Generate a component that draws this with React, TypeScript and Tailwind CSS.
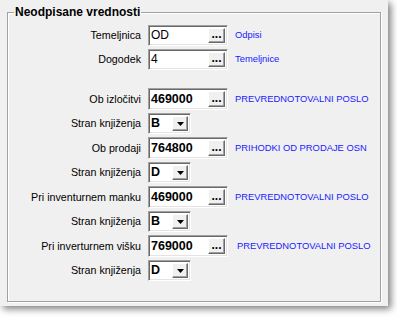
import React from "react";

const sunken =
  "relative flex items-center bg-white border border-t-[#a0a0a0] border-l-[#a0a0a0] border-b-white border-r-white shadow-[inset_1px_1px_0_#696969,inset_-1px_-1px_0_#e3e3e3]";

function Dots() {
  return (
    <div className="absolute right-[2px] top-[2px] bottom-[2px] w-[17px] flex items-center justify-center bg-[#f0f0f0] border border-t-white border-l-white border-b-[#696969] border-r-[#696969] shadow-[inset_-1px_-1px_0_#a0a0a0]">
      <span className="text-[12px] font-bold leading-none -mt-[3px] text-black">...</span>
    </div>
  );
}

function TextBox({ value, bold, h }: { value: string; bold?: boolean; h: string }) {
  return (
    <div className={`${sunken} w-[80px] ${h}`}>
      <span
        className={
          bold
            ? "pl-[2px] text-[12.5px] font-bold text-black leading-none"
            : "pl-[2px] text-[12px] text-black leading-none"
        }
      >
        {value}
      </span>
      <Dots />
    </div>
  );
}

function Combo({ value }: { value: string }) {
  return (
    <div className={`${sunken} w-[43px] h-[21px]`}>
      <span className="pl-[2px] text-[12.5px] font-bold text-black leading-none">{value}</span>
      <div className="absolute right-[2px] top-[2px] bottom-[2px] w-[16px] flex items-center justify-center bg-[#f0f0f0] border border-t-white border-l-white border-b-[#696969] border-r-[#696969] shadow-[inset_-1px_-1px_0_#a0a0a0]">
        <svg width="7" height="4" viewBox="0 0 7 4">
          <path d="M0 0H7L3.5 4Z" fill="#000" />
        </svg>
      </div>
    </div>
  );
}

function Label({ children }: { children: React.ReactNode }) {
  return (
    <div className="w-[133px] shrink-0 text-right text-[10.7px] text-black whitespace-nowrap leading-none">
      {children}
    </div>
  );
}

function Blue({ children, extra }: { children: React.ReactNode; extra?: string }) {
  return (
    <div
      className={`ml-[7px] ${extra ?? ""} text-[9.4px] text-[#1a1aff] whitespace-nowrap leading-none`}
    >
      {children}
    </div>
  );
}

export default function App() {
  return (
    <div className="w-[397px] h-[317px] bg-white" style={{ fontFamily: '"Liberation Sans", Arial, sans-serif' }}>
      <div className="w-[388px] h-[306px] bg-[#f0f0f0] pl-[7px] pr-[7px] pt-[5px] shadow-[3px_3px_7px_rgba(0,0,0,0.5)]">
        <fieldset className="h-[297px] border border-[#a0a0a0] shadow-[inset_1px_1px_0_#fff,1px_1px_0_#fff] m-0 p-0 min-w-0">
          <legend className="ml-[6px] px-[1px] text-[12px] font-bold text-black leading-[14px]">
            Neodpisane vrednosti
          </legend>
          <div className="pt-[4px] flex flex-col">
            <div className="flex items-center h-[24px]">
              <Label>Temeljnica</Label>
              <div className="ml-[7px]">
                <TextBox value="OD" h="h-[21px]" />
              </div>
              <Blue>Odpisi</Blue>
            </div>
            <div className="flex items-center h-[24px]">
              <Label>Dogodek</Label>
              <div className="ml-[7px]">
                <TextBox value="4" h="h-[21px]" />
              </div>
              <Blue>Temeljnice</Blue>
            </div>
            <div className="h-[16px]" />
            <div className="flex items-center h-[24px]">
              <Label>Ob izločitvi</Label>
              <div className="ml-[7px]">
                <TextBox value="469000" bold h="h-[22px]" />
              </div>
              <Blue>PREVREDNOTOVALNI POSLO</Blue>
            </div>
            <div className="flex items-center h-[25px]">
              <Label>Stran knjiženja</Label>
              <div className="ml-[7px]">
                <Combo value="B" />
              </div>
            </div>
            <div className="flex items-center h-[24px]">
              <Label>Ob prodaji</Label>
              <div className="ml-[7px]">
                <TextBox value="764800" bold h="h-[22px]" />
              </div>
              <Blue>PRIHODKI OD PRODAJE OSN</Blue>
            </div>
            <div className="flex items-center h-[25px]">
              <Label>Stran knjiženja</Label>
              <div className="ml-[7px]">
                <Combo value="D" />
              </div>
            </div>
            <div className="flex items-center h-[24px]">
              <Label>Pri inventurnem manku</Label>
              <div className="ml-[7px]">
                <TextBox value="469000" bold h="h-[22px]" />
              </div>
              <Blue>PREVREDNOTOVALNI POSLO</Blue>
            </div>
            <div className="flex items-center h-[25px]">
              <Label>Stran knjiženja</Label>
              <div className="ml-[7px]">
                <Combo value="B" />
              </div>
            </div>
            <div className="flex items-center h-[24px]">
              <Label>Pri inverturnem višku</Label>
              <div className="ml-[7px]">
                <TextBox value="769000" bold h="h-[22px]" />
              </div>
              <Blue extra="pl-[2px]">PREVREDNOTOVALNI POSLO</Blue>
            </div>
            <div className="flex items-center h-[25px]">
              <Label>Stran knjiženja</Label>
              <div className="ml-[7px]">
                <Combo value="D" />
              </div>
            </div>
          </div>
        </fieldset>
      </div>
    </div>
  );
}
